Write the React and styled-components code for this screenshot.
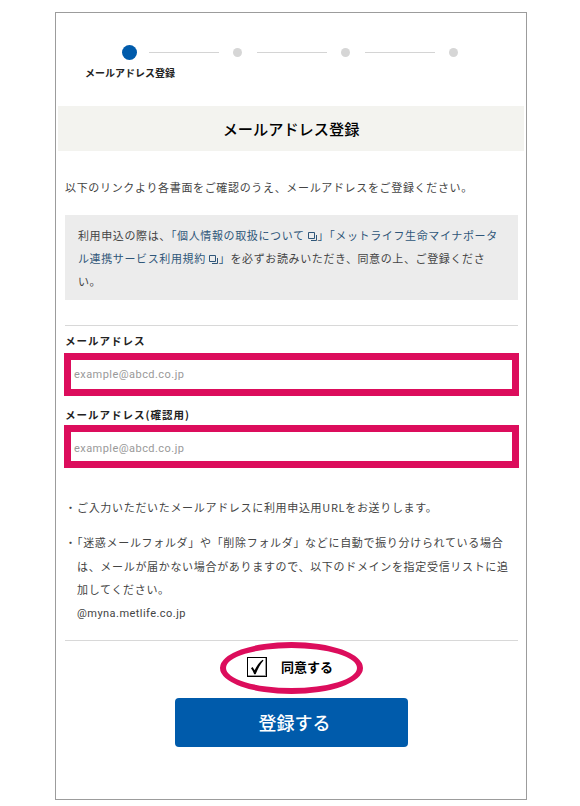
import React from 'react'
import styled, { createGlobalStyle } from 'styled-components'

const blue = '#005bab'
const pink = '#dc0d5c'
const textColor = '#444444'
const linkColor = '#2f5679'

const GlobalStyle = createGlobalStyle`
  * {
    box-sizing: border-box;
  }

  body {
    margin: 0;
    background: #ffffff;
    font-family: "Noto Sans CJK JP", "Noto Sans", sans-serif;
    color: ${textColor};
  }
`

const Frame = styled.div`
  width: 472px;
  height: 788px;
  margin: 12px 0 0 55px;
  border: 1px solid #9c9c9c;
  background: #ffffff;
`

const Stepper = styled.div`
  padding-top: 32px;
`

const StepRow = styled.div`
  display: flex;
  align-items: center;
  height: 15px;
  padding-left: 66px;
`

const Dot = styled.span`
  flex: none;
  width: ${({ $active }) => ($active ? 15 : 9)}px;
  height: ${({ $active }) => ($active ? 15 : 9)}px;
  border-radius: 50%;
  background: ${({ $active }) => ($active ? blue : '#d6d6d6')};
`

const StepLine = styled.span`
  flex: none;
  width: 70px;
  height: 1px;
  margin: 0 14px 0 ${({ $wide }) => ($wide ? 12 : 15)}px;
  background: #d4d4d4;
`

const StepLabel = styled.div`
  width: 90px;
  margin: 6px 0 0 29px;
  font-size: 10px;
  font-weight: 700;
  line-height: 14px;
  text-align: center;
  white-space: nowrap;
  color: #222222;
`

const Title = styled.h1`
  height: 45px;
  margin: 26px 2px 0;
  background: #f3f3ef;
  font-size: 15.2px;
  font-weight: 500;
  line-height: 45px;
  text-align: center;
  color: #000000;
`

const Content = styled.div`
  padding: 0 8px 0 9px;
`

const Intro = styled.p`
  margin: 27px 0 0;
  font-size: 11px;
  line-height: 18px;
  letter-spacing: 0.66px;
  white-space: nowrap;
`

const Notice = styled.div`
  height: 85px;
  margin-top: 19px;
  padding: 8.5px 10px 0 13px;
  background: #ececec;
  font-size: 11px;
  line-height: 23px;
  letter-spacing: 0.62px;
`

const DocLink = styled.span`
  color: ${linkColor};
`

const ExternalIcon = styled.svg`
  width: 9px;
  height: 9px;
  margin: 0 1px 0 3px;
  vertical-align: -1px;
`

const Divider = styled.hr`
  height: 1px;
  margin: ${({ $top }) => $top}px 0 0;
  border: 0;
  background: #d8d8d8;
`

const FieldLabel = styled.label`
  display: block;
  margin: ${({ $top }) => $top}px 0 ${({ $bottom }) => $bottom}px;
  font-size: 10.5px;
  font-weight: 700;
  line-height: 16px;
  letter-spacing: 1px;
  color: #222222;
`

const EmailInput = styled.input`
  display: block;
  width: 455px;
  height: 43px;
  margin-left: -1px;
  padding: ${({ $low }) => ($low ? 3 : 0)}px 0 0 3px;
  border: 7px solid ${pink};
  outline: 0;
  background: #ffffff;
  font-family: Roboto, "Noto Sans", sans-serif;
  font-size: 11px;
  letter-spacing: 0.45px;

  &::placeholder {
    color: #999999;
    opacity: 1;
  }
`

const Notes = styled.ul`
  margin: 28px 0 0;
  padding: 0;
  list-style: none;
  font-size: 11px;
  line-height: 23.5px;
  letter-spacing: 0.68px;
`

const Note = styled.li`
  position: relative;
  margin-bottom: 11.5px;
  padding-left: 12px;
  text-spacing-trim: trim-start;

  &:before {
    content: '・';
    position: absolute;
    left: 0;
    top: 0;
  }

  &:last-child {
    margin-bottom: 0;
  }
`

const Domain = styled.div`
  font-family: Roboto, "Noto Sans", sans-serif;
  font-size: 11px;
  line-height: 23px;
  letter-spacing: 0.45px;
`

const AgreeRow = styled.div`
  display: flex;
  justify-content: center;
  align-items: center;
  height: 57px;
  padding: 0 3px 5px 0;
`

const Agree = styled.div`
  position: relative;
  display: flex;
  align-items: center;
  gap: 14px;
  font-size: 13px;
  font-weight: 700;
  line-height: 20px;
  color: #000000;
`

const Highlight = styled.span`
  position: absolute;
  left: -27px;
  top: -15px;
  width: 143px;
  height: 52px;
  border: 6px solid ${pink};
  border-radius: 50%;
`

const CheckBox = styled.span`
  display: flex;
  align-items: center;
  justify-content: center;
  width: 20px;
  height: 20px;
  border: 1px solid #000000;
  box-shadow: inset -1px -1px 0 #9a9a9a;
`

const SubmitButton = styled.button`
  display: block;
  width: 233px;
  height: 49px;
  margin: 0 auto;
  padding: 0 0 0 6px;
  border: 0;
  border-radius: 4px;
  background: ${blue};
  color: #ffffff;
  font-family: inherit;
  font-size: 18px;
  font-weight: 500;
`

function External() {
  return (
    <ExternalIcon viewBox="0 0 9 9" fill="none" stroke={linkColor} strokeWidth="1">
      <path d="M.5.5h6v6h-6z" />
      <path d="M8.5 3v5.5H3" />
    </ExternalIcon>
  )
}

export default function App() {
  return (
    <>
      <GlobalStyle />
      <Frame>
        <Stepper>
          <StepRow>
            <Dot $active />
            <StepLine $wide />
            <Dot />
            <StepLine />
            <Dot />
            <StepLine />
            <Dot />
          </StepRow>
          <StepLabel>メールアドレス登録</StepLabel>
        </Stepper>
        <Title>メールアドレス登録</Title>
        <Content>
          <Intro>以下のリンクより各書面をご確認のうえ、メールアドレスをご登録ください。</Intro>
          <Notice>
            利用申込の際は、
            <DocLink>「個人情報の取扱について<External />」「メットライフ生命マイナポータル連携サービス利用規約<External />」</DocLink>
            を必ずお読みいただき、同意の上、ご登録ください。
          </Notice>
          <Divider $top={25} />
          <FieldLabel $top={7} $bottom={4}>メールアドレス</FieldLabel>
          <EmailInput type="email" placeholder="example@abcd.co.jp" />
          <FieldLabel $top={11} $bottom={2}>メールアドレス(確認用)</FieldLabel>
          <EmailInput $low type="email" placeholder="example@abcd.co.jp" />
          <Notes>
            <Note>ご入力いただいたメールアドレスに利用申込用URLをお送りします。</Note>
            <Note>
              「迷惑メールフォルダ」や「削除フォルダ」などに自動で振り分けられている場合は、メールが届かない場合がありますので、以下のドメインを指定受信リストに追加してください。
              <Domain>@myna.metlife.co.jp</Domain>
            </Note>
          </Notes>
          <Divider $top={15} />
          <AgreeRow>
            <Agree>
              <Highlight />
              <CheckBox>
                <svg width="14" height="16" viewBox="0 0 14 16">
                  <path d="M1 9.2l1.6-1.1 2 3.2C6.6 7 9.4 3.2 12.6.8l.9.7C10.4 5 8 9.6 5.6 15.2H4.2C3.4 13 2.3 11 1 9.2z" fill="#000000" />
                </svg>
              </CheckBox>
              同意する
            </Agree>
          </AgreeRow>
          <SubmitButton type="button">登録する</SubmitButton>
        </Content>
      </Frame>
    </>
  )
}
